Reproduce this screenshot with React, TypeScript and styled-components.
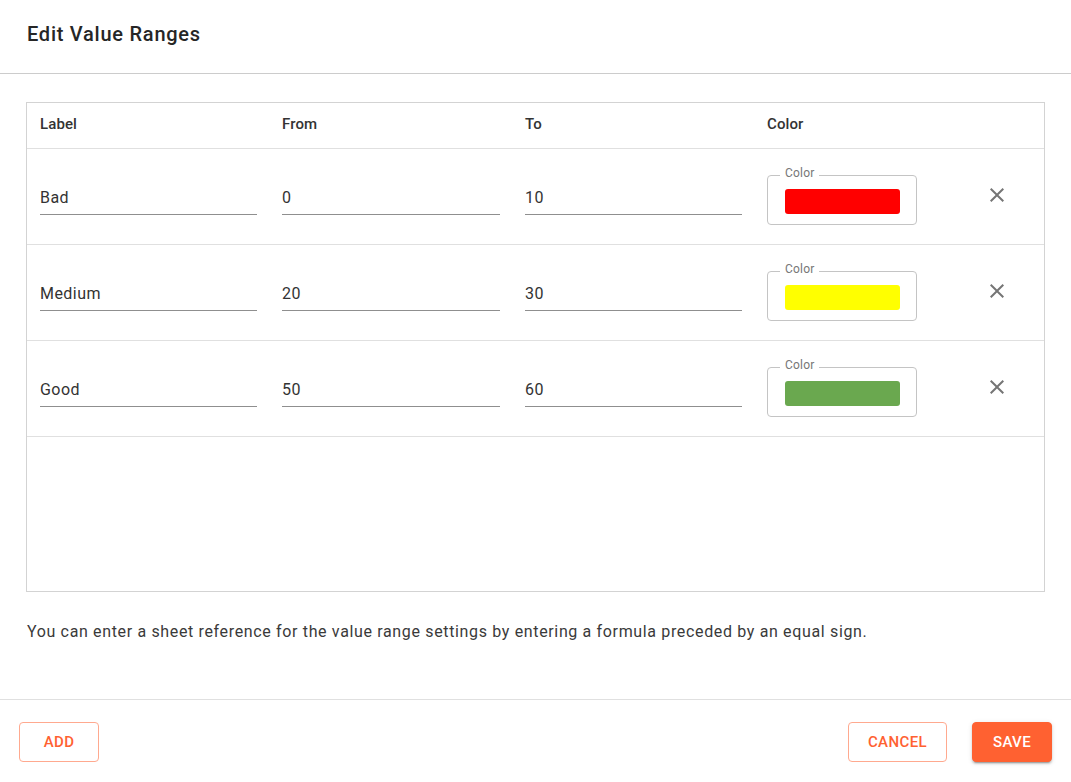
import React from "react";
import styled, { createGlobalStyle } from "styled-components";

const GlobalStyle = createGlobalStyle`
  html, body { margin: 0; padding: 0; background: #ffffff; }
  body { font-family: Roboto, "Noto Sans", Arial, sans-serif; color: #333; }
  * { box-sizing: border-box; }
`;

const Dialog = styled.div`
  width: 1071px;
  height: 782px;
  display: flex;
  flex-direction: column;
  background: #fff;
`;

const Header = styled.header`
  height: 74px;
  padding: 18px 27px 0;
  border-bottom: 1px solid #cccccc;
`;

const Title = styled.h2`
  margin: 0;
  font-size: 20px;
  line-height: 32px;
  font-weight: 500;
  letter-spacing: 0.75px;
  color: #262626;
`;

const Content = styled.main`
  flex: 1;
  display: flex;
  flex-direction: column;
  padding: 28px 26px 0;
`;

const Table = styled.div`
  height: 490px;
  border: 1px solid #d3d3d3;
  display: flex;
  flex-direction: column;
`;

const Grid = styled.div`
  display: grid;
  grid-template-columns: 242px 243px 242px 210px 40px;
  padding-left: 13px;
  border-bottom: 1px solid #e0e0e0;
`;

const HeadRow = styled(Grid)`
  height: 46px;
  align-items: center;
  padding-bottom: 4px;
`;

const HeadCell = styled.div`
  font-size: 15px;
  font-weight: 500;
  color: #333;
  line-height: 20px;
  letter-spacing: 0.1px;
`;

const Row = styled(Grid)`
  height: 96px;
  align-items: start;
  padding-top: 26px;
`;

const Input = styled.input<{ $w: number }>`
  width: ${(p) => p.$w}px;
  margin-top: 11px;
  border: none;
  border-bottom: 1px solid #8f8f8f;
  padding: 2px 0 7px;
  height: 29px;
  font-family: Roboto, "Noto Sans", Arial, sans-serif;
  font-size: 16px;
  line-height: 19px;
  letter-spacing: 0.45px;
  color: #333;
  background: transparent;
  outline: none;
`;

const ColorField = styled.div`
  position: relative;
  width: 150px;
  height: 50px;
  border: 1px solid #c4c4c4;
  border-radius: 4px;
  padding: 13px 16px 0 17px;
`;

const ColorLabel = styled.span`
  position: absolute;
  left: 12px;
  top: -10px;
  padding: 0 5px;
  background: #fff;
  font-size: 12px;
  line-height: 14px;
  letter-spacing: 0.2px;
  color: #777;
`;

const Swatch = styled.div<{ $color: string }>`
  height: 25px;
  border-radius: 3px;
  background: ${(p) => p.$color};
`;

const IconButton = styled.button`
  width: 40px;
  height: 40px;
  border: none;
  background: transparent;
  padding: 0;
  display: flex;
  align-items: center;
  justify-content: center;
  cursor: pointer;
  color: #757575;
`;

const Note = styled.p`
  margin: 28px 0 0 1px;
  font-size: 16px;
  line-height: 24px;
  color: #3a3a3a;
  letter-spacing: 0.65px;
`;

const Footer = styled.footer`
  height: 83px;
  border-top: 1px solid #e0e0e0;
  display: flex;
  align-items: flex-start;
  padding: 22px 19px 0 19px;
  gap: 25px;
`;

const Spacer = styled.div`
  flex: 1;
`;

const Button = styled.button<{ $primary?: boolean; $w: number }>`
  width: ${(p) => p.$w}px;
  height: 40px;
  border-radius: 4px;
  font-family: Roboto, "Noto Sans", Arial, sans-serif;
  font-size: 15px;
  font-weight: 500;
  letter-spacing: 0.4px;
  text-transform: uppercase;
  cursor: pointer;
  border: 1px solid ${(p) => (p.$primary ? "#ff6131" : "#ffa98f")};
  background: ${(p) => (p.$primary ? "#ff6131" : "#fff")};
  color: ${(p) => (p.$primary ? "#fff" : "#ff6131")};
  box-shadow: ${(p) =>
    p.$primary
      ? "0 3px 1px -2px rgba(0,0,0,0.2), 0 2px 2px 0 rgba(0,0,0,0.14), 0 1px 5px 0 rgba(0,0,0,0.12)"
      : "none"};
`;

const CloseIcon = () => (
  <svg width="24" height="24" viewBox="0 0 24 24" fill="currentColor">
    <path d="M19 6.41 17.59 5 12 10.59 6.41 5 5 6.41 10.59 12 5 17.59 6.41 19 12 13.41 17.59 19 19 17.59 13.41 12z" />
  </svg>
);

const ranges = [
  { label: "Bad", from: "0", to: "10", color: "#ff0000" },
  { label: "Medium", from: "20", to: "30", color: "#ffff00" },
  { label: "Good", from: "50", to: "60", color: "#6aa84f" },
];

export default function App() {
  return (
    <>
      <GlobalStyle />
      <Dialog>
        <Header>
          <Title>Edit Value Ranges</Title>
        </Header>
        <Content>
          <Table>
            <HeadRow>
              <HeadCell>Label</HeadCell>
              <HeadCell>From</HeadCell>
              <HeadCell>To</HeadCell>
              <HeadCell>Color</HeadCell>
              <div />
            </HeadRow>
            {ranges.map((r) => (
              <Row key={r.label}>
                <Input $w={217} defaultValue={r.label} />
                <Input $w={218} defaultValue={r.from} />
                <Input $w={217} defaultValue={r.to} />
                <ColorField>
                  <ColorLabel>Color</ColorLabel>
                  <Swatch $color={r.color} />
                </ColorField>
                <IconButton aria-label="remove">
                  <CloseIcon />
                </IconButton>
              </Row>
            ))}
          </Table>
          <Note>
            You can enter a sheet reference for the value range settings by entering a formula preceded by an equal sign.
          </Note>
        </Content>
        <Footer>
          <Button $w={80}>Add</Button>
          <Spacer />
          <Button $w={99}>Cancel</Button>
          <Button $w={80} $primary>
            Save
          </Button>
        </Footer>
      </Dialog>
    </>
  );
}
